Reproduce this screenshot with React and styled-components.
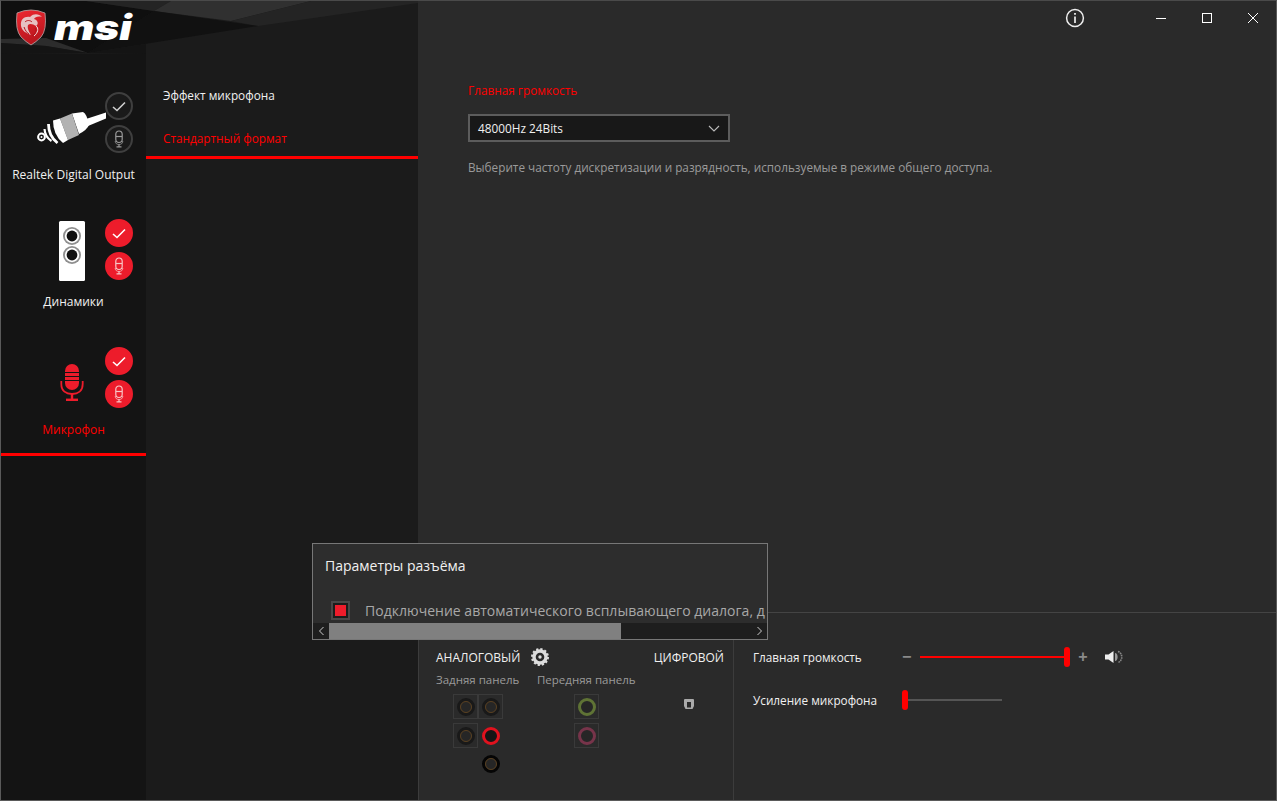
import React from 'react';
import styled, { createGlobalStyle } from 'styled-components';

const RED = '#ff0000';
const BADGE_RED = '#ed1c2b';

function CheckIcon({ $lit }) {
  return (
    <svg width="14" height="11" viewBox="0 0 14 11" fill="none" stroke={$lit ? '#fff' : '#cfcfcf'} strokeWidth="1.6">
      <path d="M1 6 L5 9.5 L13 1.5" />
    </svg>
  );
}

function MicSmallIcon({ $lit }) {
  return (
    <svg width="10" height="18" viewBox="0 0 10 18" fill="none" stroke={$lit ? '#f8c6c6' : '#9a9a9a'} strokeWidth="1.2">
      <rect x="1.8" y="1" width="6.4" height="11.5" rx="3.2" />
      <path d="M2 6.5 H8" />
      <path d="M1.2 11 C1.2 13.5 3 14.5 5 14.5 C7 14.5 8.8 13.5 8.8 11" strokeWidth="0.8" />
      <path d="M5 14.5 V16.5 M2.5 16.8 H7.5" />
    </svg>
  );
}

function CableIcon() {
  return (
    <svg width="72" height="42" viewBox="0 0 72 42" fill="none">
      <path d="M50 13 L70 6.5 L70 12.5 L52 20 Z" fill="#fff" />
      <path d="M36 7.5 L47 6 Q51 8 53 19 Q51 24 43 28 Z" fill="#fff" />
      <path d="M24 12.5 L36 7.5 L43 29 L32 34 Z" fill="#b2b2b2" />
      <path d="M17 14.5 L24 12.5 L32 34 L27 37 Q17 29 17 14.5 Z" fill="#fff" />
      <path d="M12.5 18 Q12.5 30 21.5 37" stroke="#fff" strokeWidth="2.8" />
      <path d="M8.5 23 Q9 31 15.5 35" stroke="#fff" strokeWidth="2.2" />
      <circle cx="5.5" cy="31" r="3.4" stroke="#fff" strokeWidth="2" />
      <circle cx="5.5" cy="31" r="1" fill="#fff" />
    </svg>
  );
}

function SpeakerIcon() {
  return (
    <svg width="28" height="62" viewBox="0 0 28 62">
      <rect x="1" y="1" width="26" height="60" rx="1.5" fill="#fff" />
      <circle cx="14" cy="16" r="9" fill="#8f8f8f" />
      <circle cx="14" cy="16" r="7.2" fill="#fff" />
      <circle cx="14" cy="16" r="5.4" fill="#111" />
      <circle cx="14" cy="35" r="9" fill="#8f8f8f" />
      <circle cx="14" cy="35" r="7.2" fill="#fff" />
      <circle cx="14" cy="35" r="5.4" fill="#111" />
    </svg>
  );
}

function MicIcon() {
  return (
    <svg width="24" height="38" viewBox="0 0 24 38" fill={BADGE_RED}>
      <path d="M5 7 a7 7 0 0 1 14 0 V19 a7 7 0 0 1 -14 0 Z" />
      <path d="M3.5 8.5 H20.5 M3.5 12.5 H20.5 M3.5 16.5 H20.5" stroke="#141414" strokeWidth="1.2" />
      <path d="M1.3 17 V20 C1.3 27 6 30 12 30 C18 30 22.7 27 22.7 20 V17" fill="none" stroke={BADGE_RED} strokeWidth="1.8" />
      <rect x="10.8" y="30" width="2.4" height="5" />
      <rect x="6" y="34.6" width="12" height="2.4" />
    </svg>
  );
}

function Shield() {
  return (
    <svg width="32" height="38" viewBox="0 0 32 38">
      <defs>
        <linearGradient id="shieldFill" x1="0.3" y1="0" x2="0.6" y2="1">
          <stop offset="0" stopColor="#e9262f" />
          <stop offset="1" stopColor="#b5141c" />
        </linearGradient>
      </defs>
      <path d="M2 5 Q16 -1 30 5 Q32 22 26 29 Q21 34 16 37 Q11 34 6 29 Q0 22 2 5 Z" fill="url(#shieldFill)" stroke="#b8a8a8" strokeWidth="0.8" />
      <path d="M6 18 C5 11 10 8 15 9 C19 5 24 6 27 9 C23 8 20 9 19 11 C23 12 24 16 21 18 C18 16 15 15 13 17 C12 20 14 24 16 27 C11 25 7 23 6 18 Z" fill="#e9dede" opacity="0.85" />
      <path d="M10 14 C12 12 15 12 17 14 M9 19 C10 22 12 25 14 26 M20 20 C22 23 20 26 17 28" fill="none" stroke="#b5141c" strokeWidth="1" />
      <path d="M21 18 C24 20 23 25 19 28" fill="none" stroke="#f2e4e4" strokeWidth="1" />
    </svg>
  );
}

function HeaderArt() {
  return (
    <ArtSvg viewBox="0 0 417 53" width="417" height="53">
      <rect width="417" height="53" fill="#1b1b1b" />
      <polygon points="0,0 85,0 153,10 87,52 45,43 0,38" fill="#0f0f0f" />
      <polygon points="0,38 45,37 87,52 45,45 0,42" fill="#2c2c2c" />
      <polygon points="0,42 45,45 87,52 0,53" fill="#141414" />
      <polygon points="85,0 170,0 153,10" fill="#242424" />
      <polygon points="170,0 310,0 230,20 153,10" fill="#303030" />
      <polygon points="230,20 310,0 417,0 417,2 257,25" fill="#242424" />
      <polygon points="153,10 257,25 87,52" fill="#111111" />
      <polygon points="87,52 145,43 145,53" fill="#141414" />
    </ArtSvg>
  );
}

function Jack({ $color, $fill, $faint, $tile }) {
  return (
    <JackCell $tile={$tile}>
      <JackRing $color={$color} $fill={$fill}>
        {$faint && <JackCore />}
      </JackRing>
    </JackCell>
  );
}

function Slider({ $width, $value }) {
  const pos = Math.round($width * $value);
  return (
    <Track $width={$width}>
      <TrackFill style={{ width: pos }} />
      <Thumb style={{ left: pos - 3 }} />
    </Track>
  );
}

const devices = [
  { name: 'Realtek Digital Output', icon: <CableIcon />, lit: false, top: 9 },
  { name: 'Динамики', icon: <SpeakerIcon />, lit: true, top: 2 },
  { name: 'Микрофон', icon: <MicIcon />, lit: true, top: 10, active: true },
];

export default function App() {
  return (
    <Window>
      <GlobalStyle />
      <HeaderArt />
      <Rail>
        <Brand>
          <Shield />
          <LogoWord>msi</LogoWord>
        </Brand>
        <DeviceList>
          {devices.map((d) => (
            <Device key={d.name} $active={d.active}>
              <DeviceRow>
                <IconSlot $top={d.top}>{d.icon}</IconSlot>
                <Badges>
                  <Badge $lit={d.lit}><CheckIcon $lit={d.lit} /></Badge>
                  <Badge $lit={d.lit}><MicSmallIcon $lit={d.lit} /></Badge>
                </Badges>
              </DeviceRow>
              <DeviceName $active={d.active}>{d.name}</DeviceName>
            </Device>
          ))}
        </DeviceList>
      </Rail>

      <SubNav>
        <SubItem>Эффект микрофона</SubItem>
        <SubItem $active>Стандартный формат</SubItem>
      </SubNav>

      <Main>
        <TitleBar>
          <InfoButton>
            <svg width="20" height="20" viewBox="0 0 20 20" fill="none" stroke="#eee" strokeWidth="1.5">
              <circle cx="10" cy="10" r="8.4" />
              <path d="M10 8.5 V15" strokeWidth="1.7" />
              <path d="M10 5 V6.8" strokeWidth="1.8" />
            </svg>
          </InfoButton>
          <WinButton>
            <svg width="12" height="12" viewBox="0 0 12 12" stroke="#fff"><path d="M1 6.5 H11" /></svg>
          </WinButton>
          <WinButton>
            <svg width="12" height="12" viewBox="0 0 12 12" fill="none" stroke="#fff"><rect x="1.5" y="1.5" width="9" height="9" /></svg>
          </WinButton>
          <WinButton>
            <svg width="12" height="12" viewBox="0 0 12 12" stroke="#fff"><path d="M1 1 L11 11 M11 1 L1 11" /></svg>
          </WinButton>
        </TitleBar>

        <Content>
          <SectionLabel>Главная громкость</SectionLabel>
          <Select>
            <span>48000Hz 24Bits</span>
            <svg width="12" height="7" viewBox="0 0 12 7" fill="none" stroke="#bbb" strokeWidth="1.1">
              <path d="M1 1 L6 6 L11 1" />
            </svg>
          </Select>
          <Hint>Выберите частоту дискретизации и разрядность, используемые в режиме общего доступа.</Hint>
        </Content>

        <Bottom>
          <JackPanel>
            <JackHead>
              <HeadGroup>
                <HeadText>АНАЛОГОВЫЙ</HeadText>
                <svg width="18" height="18" viewBox="0 0 18 18">
                  <circle cx="9" cy="9" r="6" fill="none" stroke="#ddd" strokeWidth="3.4" />
                  <circle cx="9" cy="9" r="8" fill="none" stroke="#ddd" strokeWidth="2" strokeDasharray="2.2 2" />
                  <circle cx="9" cy="9" r="1.7" fill="#ddd" />
                </svg>
              </HeadGroup>
              <HeadText>ЦИФРОВОЙ</HeadText>
            </JackHead>
            <JackColumns>
              <JackColumn $width={101}>
                <PanelName>Задняя панель</PanelName>
                <JackGrid $columns={2} $indent={17}>
                  <Jack $tile $faint $color="#191919" />
                  <Jack $tile $faint $color="#191919" />
                  <Jack $tile $faint $color="#191919" />
                  <Jack $color="#e0121e" $fill="#151515" />
                  <span />
                  <Jack $faint $color="#050505" />
                </JackGrid>
              </JackColumn>
              <JackColumn $width={117}>
                <PanelName>Передняя панель</PanelName>
                <JackGrid $columns={1} $indent={37}>
                  <Jack $tile $color="#5f7335" />
                  <Jack $tile $color="#77344a" />
                </JackGrid>
              </JackColumn>
              <DigitalPort>
                <svg width="10" height="10" viewBox="0 0 10 10">
                  <path d="M0 1 Q0 0 1 0 H9 Q10 0 10 1 V7 L8.5 10 H1.5 L0 7 Z" fill="#aaa" />
                  <rect x="3" y="3" width="4" height="5.5" fill="#2a2a2a" />
                </svg>
              </DigitalPort>
            </JackColumns>
          </JackPanel>

          <VolumePanel>
            <VolumeRow>
              <VolumeLabel>Главная громкость</VolumeLabel>
              <Sign>−</Sign>
              <Slider $width={147} $value={1} />
              <Sign $plus>+</Sign>
              <SpeakerGlyph width="18" height="14" viewBox="0 0 18 14">
                <path d="M0 4.5 H3.5 L8.5 1 V13 L3.5 9.5 H0 Z" fill="#eee" />
                <path d="M10 3 C13.5 3 13.5 11 10 11 Z" fill="#999" />
                <path d="M13 1.5 C18 3 18 11 13 12.5" fill="none" stroke="#888" strokeWidth="1.6" strokeDasharray="1.6 0.8" />
              </SpeakerGlyph>
            </VolumeRow>
            <VolumeRow>
              <VolumeLabel>Усиление микрофона</VolumeLabel>
              <Slider $width={100} $value={0.03} />
            </VolumeRow>
          </VolumePanel>
        </Bottom>
      </Main>

      <Popup>
        <PopupTitle>Параметры разъёма</PopupTitle>
        <PopupRow>
          <CheckBox><CheckFill /></CheckBox>
          <PopupText>Подключение автоматического всплывающего диалога, д</PopupText>
        </PopupRow>
        <ScrollBar>
          <ScrollArrow>
            <svg width="7" height="10" viewBox="0 0 7 10" fill="none" stroke="#ccc"><path d="M5.5 1 L1.5 5 L5.5 9" /></svg>
          </ScrollArrow>
          <ScrollTrack><ScrollThumb /></ScrollTrack>
          <ScrollArrow>
            <svg width="7" height="10" viewBox="0 0 7 10" fill="none" stroke="#ccc"><path d="M1.5 1 L5.5 5 L1.5 9" /></svg>
          </ScrollArrow>
        </ScrollBar>
      </Popup>
    </Window>
  );
}

const GlobalStyle = createGlobalStyle`
  html, body {
    margin: 0;
    height: 100%;
    overflow: hidden;
    background: #2a2a2a;
  }
  body {
    font-family: 'Open Sans', 'Noto Sans', sans-serif;
    font-size: 12px;
    color: #eee;
  }
`;

const Window = styled.div`
  position: relative;
  display: flex;
  box-sizing: border-box;
  width: 1277px;
  height: 801px;
  border: 1px solid #5a5a5a;
  border-top-color: #4a4a4a;
  background: #2a2a2a;
  overflow: hidden;
`;

const Rail = styled.aside`
  flex: 0 0 145px;
  display: flex;
  flex-direction: column;
  background: #141414;
`;

const Brand = styled.div`
  position: relative;
  z-index: 2;
  display: flex;
  align-items: center;
  gap: 7px;
  height: 71px;
  padding: 0 0 19px 14px;
  box-sizing: border-box;
`;

const LogoWord = styled.span`
  display: inline-block;
  font-family: Inter, 'Liberation Sans', sans-serif;
  font-size: 35px;
  font-weight: 900;
  font-style: italic;
  line-height: 1;
  color: #fff;
  transform: scaleX(1.22);
  transform-origin: left center;
`;

const DeviceList = styled.div`
  display: flex;
  flex-direction: column;
`;

const Device = styled.div`
  box-sizing: border-box;
  height: 128px;
  padding-top: 19px;
  border-bottom: 3px solid ${(p) => (p.$active ? RED : 'transparent')};

  &:first-child {
    padding-top: 20px;
  }
`;

const DeviceRow = styled.div`
  display: flex;
  height: 61px;
`;

const IconSlot = styled.div`
  flex: 0 0 66px;
  min-width: 0;
  margin-left: 38px;
  margin-top: ${(p) => p.$top}px;
  display: flex;
  justify-content: center;
  align-items: center;
  svg {
    flex-shrink: 0;
  }
`;

const Badges = styled.div`
  position: relative;
  display: flex;
  flex-direction: column;
  gap: 5px;
`;

const Badge = styled.div`
  box-sizing: border-box;
  width: 28px;
  height: 28px;
  border-radius: 50%;
  display: flex;
  align-items: center;
  justify-content: center;
  background: ${(p) => (p.$lit ? BADGE_RED : '#1a1a1a')};
  border: 2px solid ${(p) => (p.$lit ? BADGE_RED : '#3f3f3f')};
`;

const DeviceName = styled.div`
  margin-top: 12px;
  text-align: center;
  line-height: 20px;
  font-size: 12px;
  white-space: nowrap;
  color: ${(p) => (p.$active ? RED : '#f0f0f0')};
`;

const ArtSvg = styled.svg`
  position: absolute;
  top: 0;
  left: 0;
  display: block;
  z-index: 1;
`;

const SubNav = styled.nav`
  flex: 0 0 272px;
  display: flex;
  flex-direction: column;
  padding-top: 72px;
  box-sizing: border-box;
  background: #1b1b1b;
`;

const SubItem = styled.div`
  box-sizing: border-box;
  height: 43px;
  display: flex;
  align-items: center;
  padding: ${(p) => (p.$active ? '3px 0 0 17px' : '0 0 0 17px')};
  font-size: 11.8px;
  color: ${(p) => (p.$active ? RED : '#f0f0f0')};
  border-bottom: ${(p) => (p.$active ? `3px solid ${RED}` : 'none')};
`;

const Main = styled.main`
  flex: 1;
  min-width: 0;
  display: flex;
  flex-direction: column;
  background: #2a2a2a;
`;

const TitleBar = styled.header`
  display: flex;
  justify-content: flex-end;
  align-items: center;
  height: 33px;
  flex-shrink: 0;
`;

const InfoButton = styled.div`
  display: flex;
  margin-right: 53px;
`;

const WinButton = styled.div`
  width: 46px;
  height: 33px;
  display: flex;
  align-items: center;
  justify-content: center;
`;

const Content = styled.section`
  flex: 1;
  padding: 46px 0 0 50px;
`;

const SectionLabel = styled.div`
  line-height: 20px;
  font-size: 11.8px;
  color: ${RED};
`;

const Select = styled.div`
  box-sizing: border-box;
  width: 262px;
  height: 28px;
  margin-top: 14px;
  padding: 0 8px;
  display: flex;
  align-items: center;
  justify-content: space-between;
  background: #181818;
  border: 2px solid #5c5c5c;
  font-size: 11.8px;
  color: #f0f0f0;
`;

const Hint = styled.p`
  margin: 15px 0 0;
  line-height: 20px;
  font-size: 11.75px;
  color: #9a9a9a;
`;

const Bottom = styled.footer`
  flex: 0 0 188px;
  display: flex;
  box-sizing: border-box;
  border-top: 1px solid #444;
`;

const JackPanel = styled.div`
  flex: 0 0 316px;
  box-sizing: border-box;
  padding: 34px 9px 0 17px;
  border-left: 1px solid #3c3c3c;
  border-right: 1px solid #3c3c3c;
`;

const JackHead = styled.div`
  display: flex;
  justify-content: space-between;
  align-items: center;
  height: 20px;
`;

const HeadGroup = styled.div`
  display: flex;
  align-items: center;
  gap: 11px;
`;

const HeadText = styled.span`
  font-size: 12px;
  color: #f0f0f0;
`;

const JackColumns = styled.div`
  display: flex;
  margin-top: 3px;
`;

const JackColumn = styled.div`
  flex: 0 0 ${(p) => p.$width}px;
`;

const PanelName = styled.div`
  font-size: 11.5px;
  line-height: 20px;
  color: #9a9a9a;
  white-space: nowrap;
`;

const JackGrid = styled.div`
  display: grid;
  grid-template-columns: repeat(${(p) => p.$columns}, 25px);
  grid-template-rows: 29px 28px 25px;
  margin: 4px 0 0 ${(p) => p.$indent}px;
`;

const JackCell = styled.div`
  box-sizing: border-box;
  width: 25px;
  height: 25px;
  display: flex;
  align-items: center;
  justify-content: center;
  border: 1px solid ${(p) => (p.$tile ? '#3a3a3a' : 'transparent')};
`;

const JackRing = styled.div`
  box-sizing: border-box;
  width: 18px;
  height: 18px;
  border-radius: 50%;
  display: flex;
  align-items: center;
  justify-content: center;
  border: 3px solid ${(p) => p.$color};
  background: ${(p) => p.$fill || '#262626'};
`;

const JackCore = styled.div`
  box-sizing: border-box;
  width: 12px;
  height: 12px;
  border-radius: 50%;
  border: 1px solid #5a4020;
`;

const DigitalPort = styled.div`
  margin: 26px 0 0 30px;
`;

const VolumePanel = styled.div`
  flex: 1;
  padding: 33px 0 0 19px;
  display: flex;
  flex-direction: column;
  gap: 21px;
`;

const VolumeRow = styled.div`
  display: flex;
  align-items: center;
  height: 22px;
`;

const VolumeLabel = styled.span`
  flex: 0 0 149px;
  font-size: 11.75px;
  color: #f0f0f0;
  white-space: nowrap;
`;

const Sign = styled.span`
  width: ${(p) => (p.$plus ? 32 : 18)}px;
  text-align: ${(p) => (p.$plus ? 'center' : 'left')};
  font-family: 'Liberation Sans', sans-serif;
  font-size: 16px;
  font-weight: 700;
  line-height: 1;
  color: #8a8a8a;
`;

const SpeakerGlyph = styled.svg`
  margin-left: 6px;
`;

const Track = styled.div`
  position: relative;
  flex: 0 0 ${(p) => p.$width}px;
  height: 2px;
  background: #555;
`;

const TrackFill = styled.div`
  height: 100%;
  background: ${RED};
`;

const Thumb = styled.div`
  position: absolute;
  top: -9px;
  width: 6px;
  height: 20px;
  border-radius: 3px;
  background: ${RED};
`;

const Popup = styled.div`
  position: absolute;
  left: 311px;
  top: 542px;
  z-index: 3;
  box-sizing: border-box;
  width: 456px;
  height: 97px;
  display: flex;
  flex-direction: column;
  background: #2d2d2d;
  border: 1px solid #777;
  overflow: hidden;
`;

const PopupTitle = styled.div`
  margin: 12px 0 0 12px;
  line-height: 20px;
  font-size: 14px;
  color: #f0f0f0;
`;

const PopupRow = styled.div`
  flex: 1;
  display: flex;
  align-items: flex-start;
  gap: 15px;
  margin: 25px 0 0 18px;
  min-height: 0;
`;

const CheckBox = styled.div`
  box-sizing: border-box;
  flex: 0 0 19px;
  height: 19px;
  display: flex;
  align-items: center;
  justify-content: center;
  background: #1c1c1c;
  border: 2px solid #484848;
`;

const CheckFill = styled.div`
  width: 11px;
  height: 11px;
  background: ${BADGE_RED};
`;

const PopupText = styled.span`
  line-height: 19px;
  font-size: 14px;
  letter-spacing: 0.02px;
  color: #a8a8a8;
  white-space: nowrap;
`;

const ScrollBar = styled.div`
  flex: 0 0 16px;
  display: flex;
  background: #1e1e1e;
`;

const ScrollArrow = styled.div`
  flex: 0 0 16px;
  display: flex;
  align-items: center;
  justify-content: center;
`;

const ScrollTrack = styled.div`
  flex: 1;
`;

const ScrollThumb = styled.div`
  width: 292px;
  height: 100%;
  background: #808080;
`;
